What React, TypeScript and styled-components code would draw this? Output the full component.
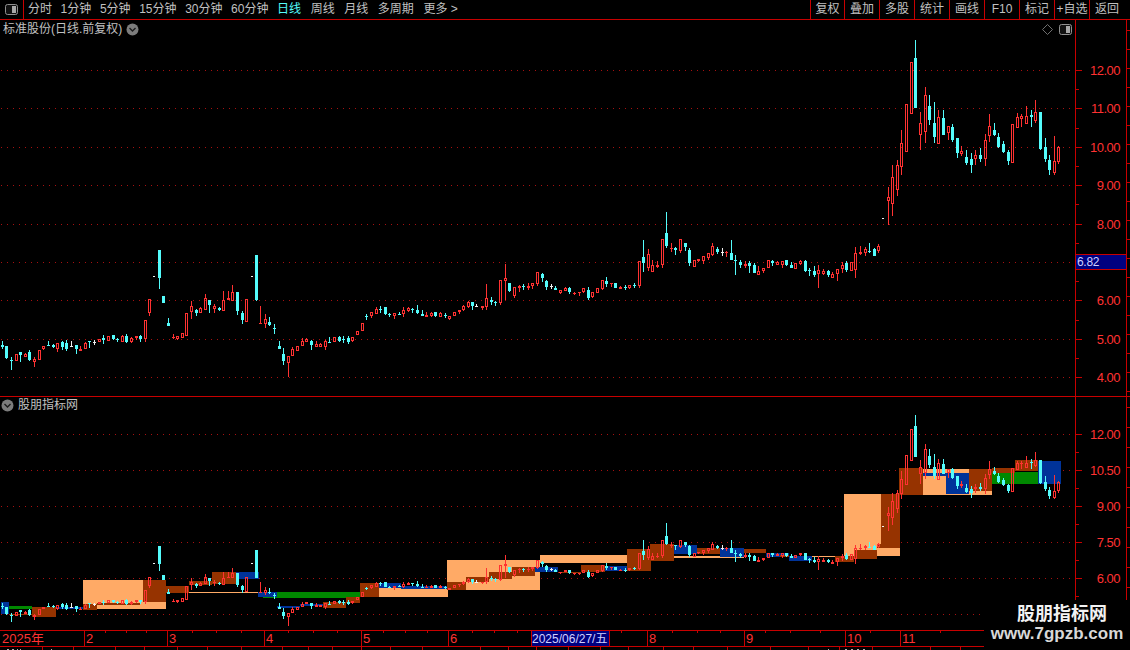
import React from "react";
import styled, { createGlobalStyle } from "styled-components";

const RED_LINE = "#c80000";
const RED = "#ff3232";
const CYAN = "#54fcfc";
const WHITE = "#f0f0f0";

const GlobalStyle = createGlobalStyle`
  html, body { margin: 0; padding: 0; background: #000; overflow: hidden; }
  #root { width: 1130px; height: 650px; }
`;

const Page = styled.div`
  position: relative;
  width: 1130px;
  height: 650px;
  overflow: hidden;
  display: flex;
  flex-direction: column;
  background: #000;
  color: #c0c0c0;
  font-family: "Liberation Sans", "Noto Sans CJK SC", sans-serif;
  font-size: 12px;
`;

const Toolbar = styled.header`
  flex: none;
  height: 20px;
  box-sizing: border-box;
  display: flex;
  border-bottom: 1px solid ${RED_LINE};
  line-height: 19px;
`;

const ToggleCell = styled.div`
  width: 24px;
  box-sizing: border-box;
  border-right: 1px solid ${RED_LINE};
  display: flex;
  align-items: center;
  justify-content: center;
`;

const Nav = styled.nav`
  display: flex;
  padding-left: 4px;
  white-space: nowrap;
  gap: 8.6px;
`;

const NavGroup = styled.div<{ $gap: number }>`
  display: flex;
  gap: ${(p) => p.$gap}px;
`;

const NavItem = styled.span<{ $active?: boolean }>`
  color: ${(p) => (p.$active ? CYAN : "#c0c0c0")};
`;

const Actions = styled.div`
  margin-left: auto;
  width: 320px;
  display: flex;
`;

const ActionButton = styled.div`
  width: 35px;
  box-sizing: border-box;
  border-left: 1px solid ${RED_LINE};
  text-align: center;
  white-space: nowrap;
  &:first-child { width: 34px; }
  &:last-child { width: 41px; padding-right: 6px; }
`;

const Pane = styled.section<{ $height: number; $divider?: boolean }>`
  position: relative;
  flex: none;
  box-sizing: border-box;
  height: ${(p) => p.$height}px;
  border-bottom: ${(p) => (p.$divider ? `1px solid ${RED_LINE}` : "none")};
`;

const PaneTitle = styled.div<{ $top: number; $left: number }>`
  position: absolute;
  top: ${(p) => p.$top}px;
  left: ${(p) => p.$left}px;
  display: flex;
  align-items: center;
  gap: 4px;
  line-height: 16px;
  white-space: nowrap;
`;

const PaneTools = styled.div`
  position: absolute;
  top: 4px;
  left: 1042px;
  display: flex;
  align-items: center;
  gap: 6px;
`;

const Chart = styled.svg`
  display: block;
  flex: none;
  shape-rendering: crispEdges;
`;

const AxisText = styled.text`
  font-family: "Liberation Sans", sans-serif;
  font-size: 13px;
  letter-spacing: -0.5px;
  fill: ${RED};
  text-anchor: end;
  shape-rendering: auto;
`;

const PriceTag = styled.text`
  font-family: "Liberation Sans", sans-serif;
  font-size: 12px;
  letter-spacing: -0.3px;
  fill: #d0d0ff;
`;

const TimeText = styled.text`
  font-family: "Liberation Sans", "Noto Sans CJK SC", sans-serif;
  font-size: 13px;
  fill: ${RED};
`;

const DateText = styled.text`
  font-family: "Liberation Sans", "Noto Sans CJK SC", sans-serif;
  font-size: 12px;
  fill: #d0d0ff;
`;

const Watermark = styled.aside`
  position: absolute;
  right: 0;
  bottom: 0;
  width: 146px;
  height: 50px;
  background: #000;
  display: flex;
  flex-direction: column;
  align-items: center;
  font-weight: 700;
  color: #f2f2f2;
  padding-top: 4px;
  box-sizing: border-box;
`;

const WatermarkTitle = styled.div`
  font-size: 18px;
  line-height: 21px;
  margin-left: 10px;
`;

const WatermarkUrl = styled.div`
  font-size: 17px;
  line-height: 18px;
  color: #d8d8d8;
  font-family: "Liberation Sans", sans-serif;
`;

type Kind = "r" | "c" | "w";
type Raw = [number, number, number, number, number, Kind];
type Candle = { cx: number; hi: number; top: number; bot: number; lo: number; kind: Kind };

const seg = (ox: number, oy: number, rows: Raw[]): Candle[] =>
  rows.map(([x, hi, top, bot, lo, kind]) => ({
    cx: Math.round(ox + x / 3),
    hi: oy + hi / 3,
    top: oy + top / 3,
    bot: oy + bot / 3,
    lo: oy + lo / 3,
    kind,
  }));

const candles: Candle[] = [
  ...seg(0, 230, [
    [7,333,345,350,357,"c"],[19,348,348,384,387,"c"],[33,380,390,393,420,"c"],[49,372,372,393,393,"r"],
    [61,366,366,375,396,"c"],[76,370,372,381,382,"r"],[88,361,366,390,393,"c"],[103,381,387,396,411,"r"],
    [118,360,360,390,390,"r"],[130,348,348,357,360,"r"],[145,333,345,348,348,"c"],[160,342,345,351,354,"c"],
    [172,339,339,357,366,"r"],[187,333,336,351,360,"c"],[199,330,339,357,363,"c"],[214,333,348,351,351,"w"],
    [229,345,345,357,372,"c"],[241,348,357,363,363,"r"],[256,336,339,357,357,"r"],[268,333,333,336,354,"c"],
    [283,330,336,339,345,"w"],[298,327,327,336,336,"r"],[310,315,324,330,342,"c"],[325,318,318,333,333,"r"],
    [340,315,315,327,330,"c"],[352,323,327,330,336,"c"],[367,315,318,336,336,"r"],[379,312,318,336,339,"c"],
    [394,321,324,336,339,"r"],[409,318,318,324,330,"r"],[421,315,318,327,336,"c"],[436,270,270,327,336,"r"],
    [448,207,207,249,258,"r"],[478,60,60,144,177,"c"],[490,198,198,219,219,"c"],[505,264,279,288,288,"c"],
    [520,312,321,324,327,"r"],[532,318,318,327,330,"r"],[547,309,309,324,324,"r"],[559,249,249,318,318,"r"],
    [574,213,228,246,267,"r"],[589,237,240,249,258,"c"],[601,231,234,249,249,"r"],[616,192,204,240,240,"r"],
    [628,210,210,225,249,"c"],[643,222,228,237,249,"r"],[658,231,235,240,243,"c"],[670,183,210,243,243,"r"],
    [685,183,204,210,210,"r"],[697,165,186,213,213,"r"],[712,186,186,243,255,"c"],[727,243,249,270,282,"c"],
    [739,207,207,276,276,"r"],[769,75,75,210,213,"c"],[781,228,279,282,282,"r"],[796,252,267,282,294,"r"],
    [808,261,276,285,288,"c"],[823,282,294,297,312,"c"],[838,333,348,357,357,"c"],[850,354,372,393,405,"c"],
    [865,378,378,399,441,"r"],[877,351,357,378,378,"r"],[892,348,348,363,363,"r"],
  ]),
  ...seg(300, 250, [
    [7,264,274,288,288,"r"],[19,264,268,276,276,"r"],[34,270,273,285,300,"c"],[49,273,282,291,291,"r"],
    [61,279,282,291,291,"r"],[76,270,273,291,300,"r"],[88,261,276,279,279,"c"],[103,261,261,276,276,"r"],
    [118,258,261,273,276,"c"],[130,258,267,270,279,"c"],[145,258,264,276,282,"c"],[157,261,261,273,276,"r"],
    [172,243,243,255,255,"r"],[187,219,219,243,243,"r"],[199,192,198,201,210,"c"],[214,186,186,198,204,"r"],
    [229,171,177,192,192,"r"],[241,168,177,180,189,"c"],[256,171,171,192,195,"c"],[268,189,192,195,201,"c"],
    [283,189,189,198,207,"r"],[298,186,191,195,195,"c"],[310,171,180,192,201,"r"],[325,171,174,183,186,"r"],
    [337,174,177,180,189,"c"],[352,165,180,189,192,"c"],[367,180,192,198,198,"c"],[379,186,195,201,201,"r"],
    [394,186,189,198,201,"r"],[406,186,186,198,201,"c"],[421,186,189,201,201,"r"],[436,189,195,198,204,"c"],
    [448,198,198,207,210,"r"],[463,186,186,198,198,"r"],[478,180,180,186,192,"r"],[490,165,168,180,183,"r"],
    [505,153,156,171,174,"r"],[517,156,156,168,180,"c"],[529,162,168,171,171,"w"],[547,168,168,174,180,"r"],
    [559,102,144,171,180,"r"],[574,141,150,156,165,"c"],[586,153,156,159,168,"c"],[601,90,90,159,165,"r"],
    [616,42,84,93,150,"r"],[628,99,99,123,126,"c"],[643,111,111,138,144,"r"],[658,105,108,114,126,"r"],
    [670,102,108,111,120,"c"],[685,99,108,114,120,"r"],[697,99,99,108,117,"r"],[712,66,66,102,108,"r"],
    [727,69,72,84,96,"c"],[739,90,93,111,120,"c"],[754,102,108,111,117,"w"],[766,108,114,120,120,"c"],
    [781,120,120,129,132,"r"],[796,111,114,123,123,"r"],[808,111,114,126,132,"c"],[823,126,129,132,135,"r"],
    [838,126,126,129,138,"r"],[850,114,114,126,129,"r"],[865,111,120,144,150,"c"],[877,126,126,141,144,"r"],
    [892,114,114,129,129,"r"],
  ]),
  ...seg(600, 200, [
    [7,240,240,267,270,"r"],[19,231,243,252,261,"c"],[33,249,249,252,261,"r"],[46,249,249,264,264,"c"],
    [61,258,261,267,267,"r"],[76,255,261,264,270,"c"],[88,255,255,264,267,"r"],[103,249,255,258,264,"c"],
    [118,183,183,258,264,"r"],[130,120,171,189,216,"c"],[145,147,162,204,213,"r"],[157,180,195,216,216,"r"],
    [172,183,195,201,204,"r"],[187,117,117,195,204,"r"],[199,36,99,138,144,"c"],[214,129,144,147,156,"r"],
    [226,141,144,150,165,"c"],[241,117,117,153,159,"r"],[256,129,129,141,153,"c"],[268,144,150,189,198,"c"],
    [283,180,180,201,201,"r"],[295,177,177,183,186,"r"],[310,168,168,183,192,"r"],[325,159,159,174,180,"r"],
    [337,129,138,165,168,"r"],[352,141,147,156,162,"c"],[367,144,156,159,168,"w"],[379,153,156,156,171,"r"],
    [394,120,159,180,180,"c"],[406,165,180,183,225,"c"],[421,180,186,195,204,"c"],[436,183,192,198,204,"r"],
    [448,183,189,198,219,"c"],[463,189,195,219,219,"c"],[475,198,213,225,225,"r"],[490,204,204,213,219,"r"],
    [505,180,180,204,204,"r"],[517,180,183,189,198,"c"],[532,183,186,195,195,"r"],[547,183,183,195,204,"r"],
    [559,180,180,195,198,"c"],[574,186,195,204,204,"c"],[586,189,189,207,207,"r"],[601,180,183,192,195,"r"],
    [616,180,183,213,216,"c"],[628,204,210,213,228,"c"],[643,198,213,225,231,"c"],[655,195,210,222,264,"r"],
    [670,207,213,222,225,"r"],[685,210,213,225,231,"c"],[697,216,222,234,234,"r"],[712,207,207,222,243,"r"],
    [727,186,195,207,219,"r"],[739,183,189,210,216,"c"],[754,186,186,213,213,"r"],[766,141,159,210,234,"r"],
    [781,138,156,162,165,"r"],[796,141,147,159,168,"r"],[808,129,153,156,159,"c"],[823,144,147,168,168,"c"],
    [835,132,138,153,159,"r"],
  ]),
  ...seg(880, 30, [
    [25,471,501,513,585,"r"],[37,405,441,522,558,"r"],[52,390,405,480,498,"r"],[64,300,339,411,435,"r"],
    [79,222,222,366,366,"r"],[94,96,96,252,252,"r"],[106,30,84,234,234,"c"],[121,246,279,315,360,"r"],
    [136,171,195,306,339,"r"],[148,195,228,270,285,"c"],[163,216,279,321,339,"c"],[175,240,261,342,342,"r"],
    [190,240,264,315,315,"c"],[205,288,288,309,330,"r"],[217,282,291,330,336,"c"],[232,324,324,369,384,"c"],
    [244,348,363,372,378,"r"],[259,360,381,399,405,"c"],[274,369,387,405,429,"c"],[286,360,375,387,405,"r"],
    [301,354,375,387,396,"c"],[316,312,330,387,408,"r"],[328,252,288,318,336,"r"],[343,279,300,315,318,"c"],
    [355,309,321,351,354,"c"],[370,333,342,366,369,"c"],[385,360,366,393,405,"c"],[397,282,282,399,399,"r"],
    [412,249,261,294,294,"r"],[424,252,258,267,291,"r"],[439,228,258,282,282,"r"],[454,240,255,261,291,"c"],
    [466,210,246,273,279,"r"],[481,246,246,357,360,"c"],[496,324,351,387,396,"c"],[508,375,390,420,435,"c"],
    [523,318,393,429,435,"r"],[535,348,351,396,402,"r"],
  ]),
];

const dashes: [number, number][] = [[153, 276], [251, 276], [882, 218]];

const colors = { p: "#ffaa66", b: "#963300", u: "#003399", g: "#008800" };
type Box = [number, number, number, number, keyof typeof colors];

const boxes: Box[] = [
  [1,9,602,614,"u"],[9,32,606,609,"g"],[9,32,614,615,"b"],[32,56,607,617,"b"],[56,83,607,609,"u"],
  [83,166,580,609,"p"],[83,97,604,610,"b"],[97,140,603,605,"b"],[143,166,580,602,"b"],
  [166,189,586,593,"b"],[189,212,581,585,"b"],[212,236,572,584,"b"],[236,259,572,579,"u"],
  [189,259,592,593,"p"],[263,277,597,598,"g"],[258,277,592,597,"u"],[277,360,592,598,"g"],
  [277,300,606,608,"u"],[300,323,604,606,"u"],[323,346,602,608,"b"],[346,360,597,603,"b"],
  [360,379,583,597,"b"],[379,401,588,597,"p"],[401,448,589,597,"p"],[379,401,583,588,"u"],[401,447,586,589,"u"],
  [447,540,560,590,"p"],[447,466,582,590,"b"],[466,489,577,582,"b"],[489,512,572,579,"b"],[512,535,567,576,"b"],
  [535,558,567,572,"u"],[540,627,555,563,"p"],[558,581,572,573,"b"],[581,605,565,572,"b"],[605,627,566,571,"u"],
  [627,651,549,571,"b"],[650,674,544,561,"b"],[674,697,545,554,"u"],[674,744,556,558,"p"],[697,720,548,554,"b"],
  [720,744,548,557,"u"],[744,766,549,553,"b"],[766,789,553,557,"u"],[780,789,555,557,"b"],[789,812,556,561,"u"],
  [812,835,556,557,"p"],[835,854,556,562,"b"],
  [844,900,494,556,"p"],[854,877,550,559,"b"],[881,900,494,548,"b"],[877,881,544,548,"b"],
  [899,923,468,495,"b"],[923,992,469,495,"p"],[923,946,473,476,"u"],[946,969,473,494,"u"],[969,992,469,491,"b"],
  [992,1015,473,484,"g"],[1015,1038,472,484,"g"],[992,1015,468,473,"b"],[1015,1038,460,471,"b"],[1038,1061,461,484,"u"],
];

const topMap = (y: number) => Math.round(y);
const bottomMap = (y: number) => Math.round(434 + (y - 70.5) * 0.6266);

const candleColor = (k: Kind) => (k === "r" ? RED : k === "c" ? CYAN : WHITE);

function CandleSeries({ map }: { map: (y: number) => number }) {
  return (
    <g>
      {candles.map((c, i) => {
        const col = candleColor(c.kind);
        const hi = map(c.hi);
        const top = map(c.top);
        const lo = map(c.lo);
        const bot = Math.max(map(c.bot), top + 1);
        const h = bot - top;
        return (
          <g key={i}>
            {top > hi && <rect x={c.cx} y={hi} width={1} height={top - hi} fill={col} />}
            {lo > bot && <rect x={c.cx} y={bot} width={1} height={lo - bot} fill={col} />}
            {c.kind === "r" && h > 2 ? (
              <rect x={c.cx - 0.5} y={top + 0.5} width={2} height={h - 1} fill="none" stroke={col} strokeWidth={1} />
            ) : (
              <rect x={c.cx - 1} y={top} width={3} height={h} fill={col} />
            )}
          </g>
        );
      })}
      {dashes.map(([x, y]) => (
        <rect key={x} x={x} y={map(y)} width={2} height={1} fill={WHITE} />
      ))}
    </g>
  );
}

function GridLines({ ys }: { ys: number[] }) {
  return (
    <g>
      {ys.map((y) => (
        <line key={y} x1={1} x2={1075} y1={y + 0.5} y2={y + 0.5} stroke="#a81010" strokeDasharray="1 5" />
      ))}
    </g>
  );
}

function AxisFrame({ y1, y2, ticks, minor, step, labels }: {
  y1: number; y2: number; ticks: number[]; minor: number[]; step: number; labels: [number, string][];
}) {
  const right: number[] = [];
  for (let y = y1 + 10; y < y2; y += step) right.push(Math.round(y));
  return (
    <g>
      <rect x={1075} y={y1} width={1} height={y2 - y1} fill={RED_LINE} />
      <rect x={1126} y={y1} width={1} height={y2 - y1} fill={RED_LINE} />
      {ticks.map((y) => <rect key={y} x={1076} y={y} width={6} height={1} fill={RED_LINE} />)}
      {minor.map((y) => <rect key={y} x={1076} y={y} width={3} height={1} fill={RED_LINE} />)}
      {right.map((y) => <rect key={y} x={1127} y={y} width={3} height={1} fill={RED_LINE} />)}
      {labels.map(([y, t]) => <AxisText key={t} x={1120} y={y + 5}>{t}</AxisText>)}
    </g>
  );
}

const ToggleIcon = () => (
  <svg width="13" height="11" viewBox="0 0 13 11">
    <rect x="0.5" y="0.5" width="12" height="10" rx="2" fill="#111" stroke="#909090" />
    <rect x="7" y="2" width="4" height="7" fill="#a8a8a8" />
  </svg>
);

const DiamondIcon = () => (
  <svg width="11" height="11" viewBox="0 0 11 11">
    <path d="M5.5 0.5 L10.5 5.5 L5.5 10.5 L0.5 5.5 Z" fill="none" stroke="#707070" />
  </svg>
);

const ChevronBadge = () => (
  <svg width="13" height="13" viewBox="0 0 13 13">
    <circle cx="6.5" cy="6.5" r="6" fill="#7c7c7c" />
    <path d="M3.5 5 L6.5 8 L9.5 5" fill="none" stroke="#1c1c1c" strokeWidth="1.4" />
  </svg>
);

const timeSeps = [84, 167, 264, 361, 448, 531, 609, 647, 744, 845, 900];
const upTicks = [105, 126, 146, 192, 216, 241, 288, 313, 337, 383, 405, 427, 472, 494, 517, 621, 672, 697, 720, 765, 790, 820, 870, 940];
const downTicks = [42, 73, 115, 144, 177, 207, 241, 282, 308, 332, 361, 390, 422, 480, 508, 536, 568, 600, 628, 663, 693, 727, 770, 808, 839, 872, 930, 960];
const timeLabels: [number, string][] = [[2, "2025年"], [86, "2"], [169, "3"], [266, "4"], [363, "5"], [450, "6"], [649, "8"], [746, "9"], [847, "10"], [902, "11"]];
const stripMarks = [7, 8, 12, 13, 17, 20, 51, 828, 845, 846, 851, 852, 857, 858, 863, 864];

const intervals = ["分时", "1分钟", "5分钟", "15分钟", "30分钟", "60分钟"];
const periods = ["日线", "周线", "月线", "多周期", "更多 >"];
const actions = ["复权", "叠加", "多股", "统计", "画线", "F10", "标记", "+自选", "返回"];

export default function App() {
  return (
    <Page>
      <GlobalStyle />
      <Toolbar>
        <ToggleCell><ToggleIcon /></ToggleCell>
        <Nav>
          <NavGroup $gap={8.6}>
            {intervals.map((n) => <NavItem key={n}>{n}</NavItem>)}
          </NavGroup>
          <NavGroup $gap={9.6}>
            {periods.map((n) => <NavItem key={n} $active={n === "日线"}>{n}</NavItem>)}
          </NavGroup>
        </Nav>
        <Actions>
          {actions.map((a) => <ActionButton key={a}>{a}</ActionButton>)}
        </Actions>
      </Toolbar>

      <Pane $height={377} $divider>
        <Chart width={1130} height={376} viewBox="0 20 1130 376">
          <GridLines ys={[70, 108, 147, 185, 224, 262, 300, 339, 377]} />
          <AxisFrame
            y1={20}
            y2={396}
            step={19}
            ticks={[70, 108, 147, 185, 224, 300, 339, 377]}
            minor={[89, 128, 166, 204, 243, 281, 320, 358]}
            labels={[[70, "12.00"], [108, "11.00"], [147, "10.00"], [185, "9.00"], [224, "8.00"], [300, "6.00"], [339, "5.00"], [377, "4.00"]]}
          />
          <CandleSeries map={topMap} />
          <rect x={1076} y={254} width={50} height={16} fill="#000080" />
          <rect x={1076} y={254} width={50} height={1} fill={RED_LINE} />
          <rect x={1076} y={269} width={50} height={1} fill={RED_LINE} />
          <PriceTag x={1077} y={266}>6.82</PriceTag>
        </Chart>
        <PaneTitle $top={1} $left={3}>
          <span>标准股份(日线.前复权)</span>
          <ChevronBadge />
        </PaneTitle>
        <PaneTools>
          <DiamondIcon />
          <ToggleIcon />
        </PaneTools>
      </Pane>

      <Pane $height={233}>
        <Chart width={1130} height={233} viewBox="0 397 1130 233">
          <GridLines ys={[434, 470, 506, 542, 578, 614]} />
          {boxes.map(([x1, x2, y1, y2, c], i) => (
            <rect key={i} x={x1} y={y1} width={x2 - x1} height={y2 - y1} fill={colors[c]} />
          ))}
          <CandleSeries map={bottomMap} />
          <AxisFrame
            y1={397}
            y2={630}
            step={20}
            ticks={[434, 470, 506, 542, 578, 614]}
            minor={[452, 488, 524, 560, 596]}
            labels={[[434, "12.00"], [470, "10.50"], [506, "9.00"], [542, "7.50"], [578, "6.00"]]}
          />
        </Chart>
        <PaneTitle $top={0} $left={1}>
          <ChevronBadge />
          <span>股朋指标网</span>
        </PaneTitle>
      </Pane>

      <Chart width={1130} height={20} viewBox="0 630 1130 20">
        <rect x={0} y={630} width={1130} height={1} fill={RED_LINE} />
        <rect x={0} y={646} width={1130} height={1} fill={RED_LINE} />
        {timeSeps.map((x) => <rect key={x} x={x} y={631} width={1} height={15} fill={RED_LINE} />)}
        {upTicks.map((x) => <rect key={x} x={x} y={631} width={1} height={2} fill={RED_LINE} />)}
        {downTicks.map((x) => <rect key={x} x={x} y={647} width={1} height={3} fill={RED_LINE} />)}
        {stripMarks.map((x) => <rect key={x} x={x} y={649} width={1} height={1} fill="#b0b0b0" />)}
        {timeLabels.map(([x, t]) => <TimeText key={t} x={x} y={643}>{t}</TimeText>)}
        <rect x={532} y={631} width={77} height={15} fill="#000080" />
        <DateText x={532} y={643}>2025/06/27/五</DateText>
      </Chart>

      <Watermark>
        <WatermarkTitle>股朋指标网</WatermarkTitle>
        <WatermarkUrl>www.7gpzb.com</WatermarkUrl>
      </Watermark>
    </Page>
  );
}
